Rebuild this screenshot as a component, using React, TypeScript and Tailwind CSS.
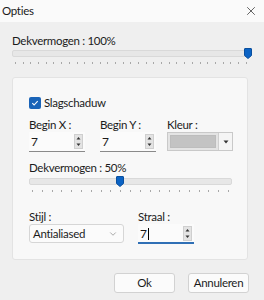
import { ChevronDown, X } from "lucide-react";

const FONT = { fontFamily: 'Lato, "Noto Sans", sans-serif', letterSpacing: "-0.3px" };

function Thumb() {
  return (
    <svg width="8" height="11" viewBox="0 0 8 11" className="block">
      <path d="M1 0.5h6a.5.5 0 0 1 .5.5v6.5L4 10.5 0.5 7.5V1a.5.5 0 0 1 .5-.5z" fill="#0b63c4" stroke="#0a4f9e" />
    </svg>
  );
}

function Slider({ thumbAt, ticks }: { thumbAt: number; ticks: number }) {
  return (
    <div className="w-full">
      <div className="relative flex h-[11px] items-center">
        <div className="h-[7px] w-full rounded-[2px] border border-[#d9d9d9] bg-[#e7e7e7]" />
        <div className="absolute top-0" style={{ left: thumbAt }}>
          <Thumb />
        </div>
      </div>
      <div className="mt-[3px] flex justify-between px-[3px]">
        {Array.from({ length: ticks }).map((_, i) => (
          <span key={i} className="h-[2px] w-px bg-[#a8a8a8]" />
        ))}
      </div>
    </div>
  );
}

function Spin() {
  return (
    <div className="flex h-[15px] w-[9px] flex-col justify-between border border-[#cfcfcf] bg-[#e3e3e3]">
      <svg width="7" height="6" viewBox="0 0 7 6" className="block">
        <path d="M1.5 4.5h4L3.5 2z" fill="#333" />
      </svg>
      <svg width="7" height="6" viewBox="0 0 7 6" className="block">
        <path d="M1.5 1.5h4L3.5 4z" fill="#333" />
      </svg>
    </div>
  );
}

function NumberBox({ value, focused }: { value: string; focused?: boolean }) {
  return (
    <div
      className={`flex h-[20px] w-[56px] items-center justify-between bg-[#fbfbfb] px-[2px] ${
        focused ? "border-b-2 border-[#2f6fb5]" : "border-b border-[#8a8a8a]"
      }`}
    >
      <span className="text-[12px] leading-none text-[#1b1b1b]">
        {value}
        {focused && <span className="ml-[1px] inline-block h-[12px] w-px translate-y-[2px] bg-black" />}
      </span>
      <Spin />
    </div>
  );
}

export default function App() {
  return (
    <div className="h-[300px] w-[264px] overflow-hidden bg-[#efefef] text-[11.5px] text-[#1b1b1b]" style={FONT}>
      <div className="flex h-[22px] items-center justify-between bg-[#fafafa] pl-[2px] pr-[6px]">
        <span>Opties</span>
        <X className="h-[14px] w-[14px] text-[#333]" strokeWidth={1.3} />
      </div>

      <div className="px-[12px] pt-[12px]">
        <div className="leading-[14px]">Dekvermogen : 100%</div>
        <div className="pr-[2px]">
          <Slider thumbAt={232} ticks={31} />
        </div>

        <div className="mt-[13px] h-[183px] w-[236px] rounded-[3px] border border-[#e3e3e3] bg-[#f8f8f8] px-[16px] pt-[18px]">
          <div className="flex h-[14px] items-center gap-[3px]">
            <span className="grid h-[12px] w-[12px] place-items-center rounded-[2px] bg-[#1a64b8]">
              <svg width="8" height="8" viewBox="0 0 8 8">
                <path d="M1.3 4.2l1.8 1.8 3.6-3.9" fill="none" stroke="#fff" strokeWidth="1.1" />
              </svg>
            </span>
            <span className="leading-[14px]">Slagschaduw</span>
          </div>

          <div className="mt-[8px] flex">
            <div>
              <div className="leading-[14px]">Begin X :</div>
              <NumberBox value="7" />
            </div>
            <div className="ml-[15px]">
              <div className="leading-[14px]">Begin Y :</div>
              <NumberBox value="7" />
            </div>
            <div className="ml-[11px]">
              <div className="leading-[14px]">Kleur :</div>
              <div className="flex h-[19px] w-[66px] border border-[#c9c9c9] bg-[#e4e4e4]">
                <div className="m-[2px] flex-1 border border-[#bdbdbd] bg-[#c3c3c3]" />
                <div className="grid w-[14px] place-items-center border-l border-[#cfcfcf] bg-[#f5f5f5]">
                  <svg width="6" height="4" viewBox="0 0 6 4">
                    <path d="M0.5 0.5h5L3 3.5z" fill="#333" />
                  </svg>
                </div>
              </div>
            </div>
          </div>

          <div className="mt-[9px] leading-[14px]">Dekvermogen : 50%</div>
          <div className="mt-[1px] w-[203px]">
            <Slider thumbAt={87} ticks={21} />
          </div>

          <div className="mt-[18px] flex gap-[14px]">
            <div>
              <div className="leading-[14px]">Stijl :</div>
              <div className="flex h-[19px] w-[95px] items-center justify-between rounded-[3px] border border-[#d6d6d6] bg-[#fbfbfb] pl-[3px] pr-[5px]">
                <span>Antialiased</span>
                <ChevronDown className="h-[10px] w-[10px] text-[#777]" strokeWidth={1.5} />
              </div>
            </div>
            <div>
              <div className="leading-[14px]">Straal :</div>
              <NumberBox value="7" focused />
            </div>
          </div>
        </div>

        <div className="mt-[13px] flex justify-end gap-[13px] pr-[3px]">
          <button className="h-[20px] w-[61px] rounded-[3px] border border-[#d2d2d2] bg-[#fbfbfb]">Ok</button>
          <button className="h-[20px] w-[61px] rounded-[3px] border border-[#d2d2d2] bg-[#fbfbfb]">Annuleren</button>
        </div>
      </div>
    </div>
  );
}
